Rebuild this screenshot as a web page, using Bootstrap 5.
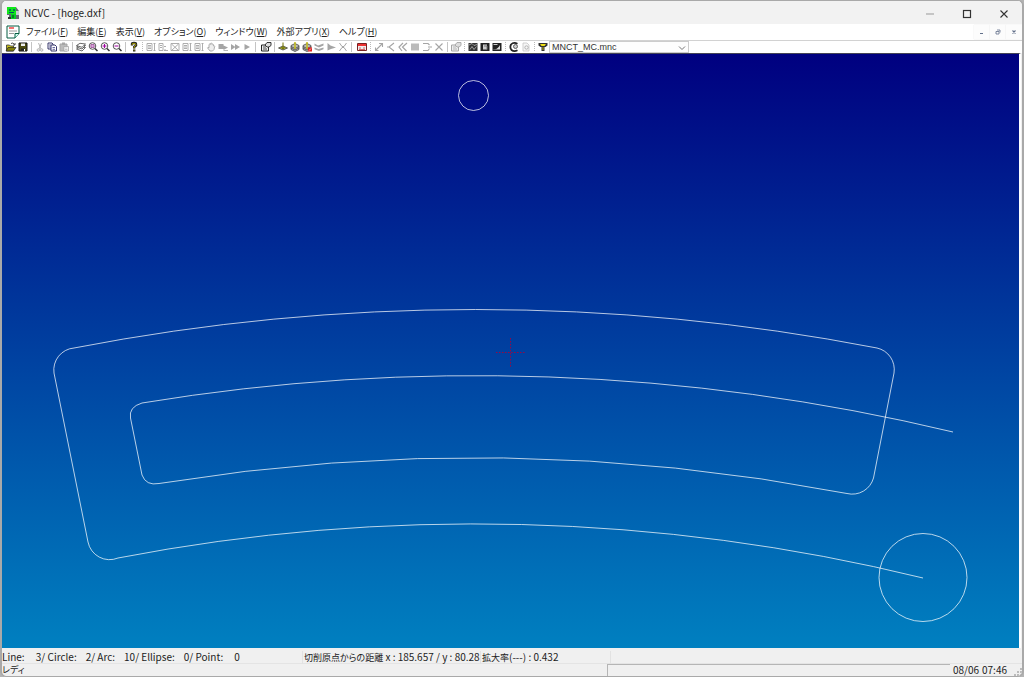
<!DOCTYPE html>
<html lang="ja">
<head>
<meta charset="utf-8">
<meta name="viewport" content="width=device-width, initial-scale=1">
<title>NCVC - [hoge.dxf]</title>
<link href="https://cdn.jsdelivr.net/npm/bootstrap@5.3.0/dist/css/bootstrap.min.css" rel="stylesheet">
<style>
body{background:#b4b4b4;font-family:"Noto Sans CJK JP",sans-serif;font-size:10px;line-height:12px;color:#222}
button{font:inherit;color:inherit;border:0;background:none;padding:0}
.app-window{background:#f0f0f0;border:1px solid #a9a9a9;border-left-width:2px;border-right-width:2px;border-radius:6px}
.title-bar{height:23px;background:#f2f2f2;padding-left:4px}
.title-bar h1{font-size:10px;line-height:12px}
.win-btn{width:37px;height:22px}
.menu-bar{height:17px;background:#fff;padding-left:4px;border-bottom:1px solid #d2d2d2}
.menu-list{gap:9px;padding-left:6px;font-size:9px;font-feature-settings:"palt"}
.menu-list button{white-space:nowrap;height:16px}
.mdi-btn{width:16px;height:14px;background:#fcfcfc;box-shadow:0 0 1px #ddd;color:#62708a}
.tool-bar{height:12px;background:#fff;padding-left:3px}
.tool-btn{width:12px;height:12px}
.tool-btn svg{width:12px;height:12px;display:block}
.tool-btn:disabled{color:#a5a5a5}
.sep,.grip{width:5px;height:10px;flex:none}
.sep::before,.grip::before{content:"";display:block;height:10px;width:1px;margin-left:2px;background:#c4c4c4}
.grip::before{background:repeating-linear-gradient(#bbb 0 1px,#fff 1px 2px)}
.sep.wide{width:7px}
.machine{width:140px;height:12px;font-size:9px;line-height:11px;font-family:"Liberation Sans",sans-serif;color:#333;border:0;box-shadow:inset 0 0 0 1px #ccc;background:#fdfdfd;border-radius:0;padding:1px 3px 0;appearance:none}
.machine-box svg{right:3px;top:4px;pointer-events:none}
.drawing{background:linear-gradient(#000080,#0080c0);min-height:0;margin-right:1px;border-right:2px solid #fff;border-top:1px solid #445}
.drawing svg{width:100%;height:100%;display:block}
.info-bar{height:16px;padding-top:3px;border-bottom:1px solid #e4e4e4}
.info-bar>div{white-space:pre;height:13px;border-right:1px solid #e2e2e2}
.geometry-info{width:301px}
.origin-info{width:178px;padding-left:1px}
.scale-info{width:130px;padding-left:1px}
.cjk{font-size:9px;font-feature-settings:"palt"}
.ready-bar{height:12px}
.progress-pane{width:343px;height:12px;border-left:1px solid #b5b5b5;border-top:1px solid #b5b5b5}
.clock{gap:3px;padding:0 7px 0 3px}
</style>
</head>
<body>
<svg width="0" height="0" class="position-absolute" aria-hidden="true">
<defs>
<symbol id="i-open" viewBox="0 0 12 12"><path d="M1.500 4h3l1 1h3v5h-7z" fill="#c8c020" stroke="#333" stroke-width=".8"/><path d="M3 6.500h8l-2.500 3.500H1z" fill="#82800a" stroke="#222" stroke-width=".7"/><path d="M6 2.500q2-1.500 3.500 1M10 2v2H8" fill="none" stroke="#222" stroke-width=".8"/></symbol>
<symbol id="i-save" viewBox="0 0 12 12"><path d="M2 2h8v8H2z" fill="#4b4b10" stroke="#111"/><path d="M4 2.500h4V5H4z" fill="#eee"/><path d="M4 7.500h4V10H4z" fill="#222"/><path d="M7 8h1v2H7z" fill="#fff"/></symbol>
<symbol id="i-cut" viewBox="0 0 12 12"><path d="M4.500 2l2.500 6M7.500 2L5 8" stroke="currentColor" fill="none" stroke-width=".8"/><circle cx="4.300" cy="9" r="1.200" fill="none" stroke="currentColor" stroke-width=".8"/><circle cx="7.700" cy="9" r="1.200" fill="none" stroke="currentColor" stroke-width=".8"/></symbol>
<symbol id="i-copy" viewBox="0 0 12 12"><g fill="#fff" stroke="#22225c" stroke-width=".9"><path d="M2 2h4l1 1v5H2z"/><path d="M5 4h4l1.500 1.500V10H5z"/></g><path d="M3 4h2M3 6h2M6.500 6.500h2.500M6.500 8.300h2.500" stroke="#448" stroke-width=".8"/></symbol>
<symbol id="i-paste" viewBox="0 0 12 12"><path d="M2 3h7v7H2z" fill="#bbb" stroke="currentColor"/><path d="M4 1.500h3V4H4z" fill="currentColor"/><path d="M6 5.500h4.500V10H6z" fill="#fff" stroke="currentColor" stroke-width=".8"/><path d="M7 7h2.500M7 8.500h2.500" stroke="currentColor" stroke-width=".6"/></symbol>
<symbol id="i-layers" viewBox="0 0 12 12"><g fill="#fff" stroke="#444" stroke-width=".8"><path d="M1.500 8L5 5.800l5.500.7L7 10z"/><path d="M1.500 6L5 3.800l5.500.7L7 8z"/><path d="M1.500 4.500L5 2.300l5.500.7L7 6.300z"/></g></symbol>
<symbol id="i-glass" viewBox="0 0 12 12"><circle cx="5.500" cy="5" r="3.300" fill="#fff" stroke="#444" stroke-width=".9"/><path d="M8 7.500l2.500 2.500" stroke="#333" stroke-width="1.500"/></symbol>
<symbol id="i-zoomall" viewBox="0 0 12 12"><use href="#i-glass"/><path d="M3.900 3.600h3.200v2.800H3.900z" fill="#e0b0e0" stroke="#904090" stroke-width=".8"/></symbol>
<symbol id="i-zoomin" viewBox="0 0 12 12"><use href="#i-glass"/><path d="M3.500 5h4M5.500 3v4" stroke="#a000a0" stroke-width="1.100"/></symbol>
<symbol id="i-zoomout" viewBox="0 0 12 12"><use href="#i-glass"/><path d="M3.500 5h4" stroke="#a000a0" stroke-width="1.100"/></symbol>
<symbol id="i-help" viewBox="0 0 12 12"><path d="M4 4.500V3q0-1 2-1t2 1v1.500L6.200 6v1.500M6.200 8.500v2" fill="none" stroke="#222" stroke-width="2.400"/><path d="M4.200 4V3q0-.7 1.800-.7t1.800.9v1L6.100 6v1.300M6.100 8.700v1" fill="none" stroke="#aaa000" stroke-width="1"/></symbol>
<symbol id="i-page" viewBox="0 0 12 12"><path d="M2 2.500h5v7H2zM3 4.500h3M3 6h3M3 7.500h3M8.500 2.500h2M9.500 2.500v7M8.500 9.500h2" fill="none" stroke="currentColor" stroke-width=".9"/></symbol>
<symbol id="i-page2" viewBox="0 0 12 12"><path d="M2 2.500h4v7H2zM3 4.500h2M3 6.500h2M7 5.500h2M7 9.500h4M8 8v2" fill="none" stroke="currentColor" stroke-width=".9"/></symbol>
<symbol id="i-pagex" viewBox="0 0 12 12"><path d="M2 2.500h8v7H2zM2.500 3l7 6.500M9.500 3l-7 6.500" fill="none" stroke="currentColor" stroke-width=".9"/></symbol>
<symbol id="i-hand" viewBox="0 0 12 12"><path d="M4 6V3.500q.7-1 1.400 0V2.500q.8-1 1.500 0v1q.8-1 1.500 0V5q1-.7 1.300.3L9 8.500 7.500 10H5L2.500 6.800q.3-1 1.500 0z" fill="#eee" stroke="currentColor" stroke-width=".9"/></symbol>
<symbol id="i-run" viewBox="0 0 12 12"><path d="M1.500 3h5v1.500L11 6.500 6.500 9V8h-5z" fill="currentColor"/><path d="M6.500 9.500h4.500" stroke="currentColor" stroke-width=".8"/></symbol>
<symbol id="i-fast" viewBox="0 0 12 12"><path d="M2 3l4.500 3L2 9zM6 3l5 3-5 3z" fill="currentColor"/></symbol>
<symbol id="i-play" viewBox="0 0 12 12"><path d="M3.500 3L9 6 3.500 9z" fill="currentColor"/></symbol>
<symbol id="i-prop" viewBox="0 0 12 12"><path d="M1.500 4h7v6h-7z" fill="#eee" stroke="currentColor"/><path d="M3 6h3M3 8h4" stroke="currentColor" stroke-width=".8"/><path d="M5 4l2-2.500h4v3L9 6H7z" fill="#ddd" stroke="currentColor" stroke-width=".9"/></symbol>
<symbol id="i-origin" viewBox="0 0 12 12"><path d="M1.500 7L6 5l4.500 2L6 9z" fill="#aab03a" stroke="#444" stroke-width=".8"/><path d="M6 1.500v6M4.500 6L6 8l1.500-2" fill="none" stroke="#737300"/></symbol>
<symbol id="i-shape" viewBox="0 0 12 12"><path d="M2 4.500L6 2.500l4 2v4l-4 2-4-2z" fill="#bbb" stroke="#444" stroke-width=".8"/><path d="M2 5.500l4 2 4-2M2 7l4 2 4-2" fill="none" stroke="#444" stroke-width=".8"/><path d="M6 1v7" stroke="#c4be1a" stroke-width="1.500"/></symbol>
<symbol id="i-shapered" viewBox="0 0 12 12"><use href="#i-shape"/><path d="M7 6.500h4v4H7z" fill="#d22"/><path d="M8 9.500l2-2" stroke="#fff" stroke-width=".7"/></symbol>
<symbol id="i-fold" viewBox="0 0 12 12"><path d="M1.500 2.500L5 4.500l5.500-2v2L6 6.500l-4.500-2zM1.500 6.500l4 1.500 5-1.500v1.700L6 10 1.500 8.300z" fill="currentColor"/></symbol>
<symbol id="i-cone" viewBox="0 0 12 12"><path d="M2.500 2l3 2.500L11 6.500 6 8l-3.500 1.500z" fill="currentColor"/></symbol>
<symbol id="i-cross" viewBox="0 0 12 12"><path d="M2.500 2L5 5.500h2L9.500 2M2.500 10L5 6.500h2L9.500 10" fill="none" stroke="currentColor"/></symbol>
<symbol id="i-nc" viewBox="0 0 12 12"><path d="M1.500 2.500h9v7h-9z" fill="#eee" stroke="#722"/><path d="M2 4h8" stroke="#e33" stroke-width="2"/><path d="M3 7h2M7 7h2M3 8.500h6" stroke="#c44" stroke-width=".8"/></symbol>
<symbol id="i-resize" viewBox="0 0 12 12"><path d="M2.500 9.500l7-7M6 2.500h3.500V6M2.500 6.500v3h3" fill="none" stroke="currentColor" stroke-width="1.100"/></symbol>
<symbol id="i-lt" viewBox="0 0 12 12"><path d="M9 2L4 6l5 4M2 6h3" fill="none" stroke="currentColor" stroke-width="1.100"/></symbol>
<symbol id="i-lt2" viewBox="0 0 12 12"><path d="M6 2L2 6l3 4M10 2L5.500 6l4 4" fill="none" stroke="currentColor" stroke-width="1.200"/></symbol>
<symbol id="i-block" viewBox="0 0 12 12"><path d="M2 2.500h8v7H2z" fill="#bbb"/></symbol>
<symbol id="i-trim" viewBox="0 0 12 12"><path d="M2 2.500h5l1.500 1.500M8.500 7.500L7 9.500H2M7 6h4" fill="none" stroke="currentColor" stroke-width="1.100"/></symbol>
<symbol id="i-x" viewBox="0 0 12 12"><path d="M2.500 2.500l7 7M9.500 2.500l-7 7" stroke="currentColor" stroke-width="1.100"/></symbol>
<symbol id="i-view1" viewBox="0 0 12 12"><path d="M1.500 2h9v8h-9z" fill="#333"/><path d="M2 4l3-1.500 2 2 3-1M3 8.500l2-3 2 3 2.500-3" fill="none" stroke="#bbb" stroke-width=".8"/></symbol>
<symbol id="i-view2" viewBox="0 0 12 12"><path d="M1.500 2h9v8h-9z" fill="#222"/><path d="M4 3.500h4v5H4z" fill="#ccc"/><path d="M5 5h3v3.500" fill="none" stroke="#777"/></symbol>
<symbol id="i-view3" viewBox="0 0 12 12"><path d="M1.500 2h9v8h-9z" fill="#222"/><path d="M2.500 8q4 1 6.500-4V8.500H2.500z" fill="#ddd"/><path d="M2.500 3.500h4" stroke="#ccc"/></symbol>
<symbol id="i-tool" viewBox="0 0 12 12"><path d="M9.500 2.700Q5.500.8 3 3.500 1.500 6.500 3.500 9 6 11 9.500 9.300" fill="none" stroke="#222" stroke-width="1.800"/><circle cx="7.500" cy="5.500" r="2" fill="#ccc" stroke="#444" stroke-width=".8"/></symbol>
<symbol id="i-doc" viewBox="0 0 12 12"><path d="M3 2h4l2 2v6H3z" fill="#f6f6f6" stroke="#c5c5c5" stroke-width=".8"/><circle cx="6.500" cy="6.500" r="1.700" fill="none" stroke="currentColor" stroke-width=".8"/></symbol>
<symbol id="i-mill" viewBox="0 0 12 12"><path d="M1.500 2h9v2.500L8.500 6H7.500v4h-3V6h-1l-2-1.500z" fill="#333"/><path d="M3 3h6L7.500 5h-3z" fill="#efdf16"/><path d="M5.500 6h1v3h-1z" fill="#bdb010"/></symbol>
</defs></svg>

<div class="app-window vh-100 d-flex flex-column overflow-hidden">
<header class="title-bar d-flex align-items-center flex-shrink-0">
<svg width="14" height="14" viewBox="0 0 14 14" aria-hidden="true"><path d="M1 1h9l3 4v8H3V9H1z" fill="#667"/><path d="M1 1h9v7H1z" fill="#10e818"/><path d="M3 3h2v2H3zM7 3h2v2H7z" fill="#075"/><path d="M3 6.500h5" stroke="#056"/><path d="M5 8h5v5H5z" fill="#08cc28"/><path d="M7 9v3" stroke="#032"/><path d="M10 5h3v4h-3z" fill="#c4cbd4"/><path d="M2 11h3v2H2z" fill="#333"/></svg>
<h1 class="mb-0 ms-1 fw-normal flex-grow-1">NCVC - [hoge.dxf]</h1>
<button class="win-btn" aria-label="最小化"><svg width="10" height="10"><path d="M1 5h8" stroke="#999"/></svg></button>
<button class="win-btn" aria-label="最大化"><svg width="10" height="10"><rect x="1.500" y="1.500" width="7" height="7" fill="none" stroke="#333" stroke-width="1.200"/></svg></button>
<button class="win-btn" aria-label="閉じる"><svg width="10" height="10"><path d="M1.500 1.500l7 7M8.500 1.500l-7 7" stroke="#333" stroke-width="1.100"/></svg></button>
</header>

<nav class="menu-bar d-flex align-items-center flex-shrink-0">
<svg width="14" height="14" viewBox="0 0 14 14" aria-hidden="true"><path d="M1 1h12v7.500L9 13H1z" fill="#fff" stroke="#075c43"/><path d="M13 8.500H9V13" fill="#cfe" stroke="#075c43"/><path d="M3 3h5" stroke="#e44" stroke-width="1.500"/><path d="M3 6h8M3 8.500h5" stroke="#999"/></svg>
<div class="menu-list d-flex flex-grow-1">
<button>ファイル(<u>F</u>)</button><button>編集(<u>E</u>)</button><button>表示(<u>V</u>)</button><button>オプション(<u>O</u>)</button><button>ウィンドウ(<u>W</u>)</button><button>外部アプリ(<u>X</u>)</button><button>ヘルプ(<u>H</u>)</button>
</div>
<button class="mdi-btn d-flex align-items-center justify-content-center" aria-label="子を最小化"><svg width="6" height="6"><path d="M1 4.500h3" stroke="currentColor"/></svg></button>
<button class="mdi-btn d-flex align-items-center justify-content-center" aria-label="元に戻す"><svg width="6" height="6"><path d="M2 1h3v2.500M1 2.500h3V5H1z" fill="none" stroke="currentColor" stroke-width=".8"/></svg></button>
<button class="mdi-btn d-flex align-items-center justify-content-center" aria-label="子を閉じる"><svg width="6" height="6"><path d="M1.500 1.500l3 3M4.500 1.500l-3 3" stroke="currentColor" stroke-width="1.100"/></svg></button>
</nav>

<div class="tool-bar d-flex align-items-center flex-shrink-0" role="toolbar" aria-label="ツールバー">
<button class="tool-btn" aria-label="開く"><svg><use href="#i-open"/></svg></button>
<button class="tool-btn" aria-label="保存"><svg><use href="#i-save"/></svg></button>
<span class="sep"></span>
<button class="tool-btn" disabled aria-label="切り取り"><svg><use href="#i-cut"/></svg></button>
<button class="tool-btn" aria-label="コピー"><svg><use href="#i-copy"/></svg></button>
<button class="tool-btn" disabled aria-label="貼り付け"><svg><use href="#i-paste"/></svg></button>
<span class="sep"></span>
<button class="tool-btn" aria-label="レイヤ"><svg><use href="#i-layers"/></svg></button>
<button class="tool-btn" aria-label="全体表示"><svg><use href="#i-zoomall"/></svg></button>
<button class="tool-btn" aria-label="拡大"><svg><use href="#i-zoomin"/></svg></button>
<button class="tool-btn" aria-label="縮小"><svg><use href="#i-zoomout"/></svg></button>
<span class="sep"></span>
<button class="tool-btn" aria-label="ヘルプ"><svg><use href="#i-help"/></svg></button>
<span class="grip"></span>
<button class="tool-btn" disabled aria-label="トレース"><svg><use href="#i-page"/></svg></button>
<button class="tool-btn" disabled aria-label="行挿入"><svg><use href="#i-page2"/></svg></button>
<button class="tool-btn" disabled aria-label="ブレーク解除"><svg><use href="#i-pagex"/></svg></button>
<button class="tool-btn" disabled aria-label="ステップ"><svg><use href="#i-page"/></svg></button>
<button class="tool-btn" disabled aria-label="カーソルまで"><svg><use href="#i-page"/></svg></button>
<button class="tool-btn" disabled aria-label="停止"><svg><use href="#i-hand"/></svg></button>
<button class="tool-btn" disabled aria-label="実行"><svg><use href="#i-run"/></svg></button>
<button class="tool-btn" disabled aria-label="高速"><svg><use href="#i-fast"/></svg></button>
<button class="tool-btn" disabled aria-label="再生"><svg><use href="#i-play"/></svg></button>
<span class="sep wide"></span>
<button class="tool-btn" aria-label="プロパティ"><svg><use href="#i-prop"/></svg></button>
<span class="sep"></span>
<button class="tool-btn" aria-label="原点"><svg><use href="#i-origin"/></svg></button>
<button class="tool-btn" aria-label="形状加工"><svg><use href="#i-shape"/></svg></button>
<button class="tool-btn" aria-label="形状編集"><svg><use href="#i-shapered"/></svg></button>
<button class="tool-btn" disabled aria-label="面加工"><svg><use href="#i-fold"/></svg></button>
<button class="tool-btn" disabled aria-label="方向"><svg><use href="#i-cone"/></svg></button>
<button class="tool-btn" disabled aria-label="交点"><svg><use href="#i-cross"/></svg></button>
<span class="sep wide"></span>
<button class="tool-btn" aria-label="NC生成"><svg><use href="#i-nc"/></svg></button>
<span class="grip"></span>
<button class="tool-btn" disabled aria-label="伸縮"><svg><use href="#i-resize"/></svg></button>
<button class="tool-btn" disabled aria-label="分岐"><svg><use href="#i-lt"/></svg></button>
<button class="tool-btn" disabled aria-label="輪郭"><svg><use href="#i-lt2"/></svg></button>
<button class="tool-btn" disabled aria-label="領域"><svg><use href="#i-block"/></svg></button>
<button class="tool-btn" disabled aria-label="切断"><svg><use href="#i-trim"/></svg></button>
<button class="tool-btn" disabled aria-label="削除"><svg><use href="#i-x"/></svg></button>
<span class="sep"></span>
<button class="tool-btn" disabled aria-label="設定"><svg><use href="#i-prop"/></svg></button>
<span class="grip"></span>
<button class="tool-btn" aria-label="表示1"><svg><use href="#i-view1"/></svg></button>
<button class="tool-btn" aria-label="表示2"><svg><use href="#i-view2"/></svg></button>
<button class="tool-btn" aria-label="表示3"><svg><use href="#i-view3"/></svg></button>
<span class="grip"></span>
<button class="tool-btn" aria-label="外部ツール"><svg><use href="#i-tool"/></svg></button>
<button class="tool-btn" disabled aria-label="文書"><svg><use href="#i-doc"/></svg></button>
<span class="grip"></span>
<button class="tool-btn" aria-label="機械情報"><svg><use href="#i-mill"/></svg></button>
<div class="machine-box position-relative d-flex">
<label class="visually-hidden" for="machine">機械情報ファイル</label>
<select id="machine" class="machine"><option>MNCT_MC.mnc</option></select>
<svg class="position-absolute" width="8" height="6" aria-hidden="true"><path d="M1 1.500l3 3 3-3" fill="none" stroke="#777"/></svg>
</div>
</div>

<main class="drawing flex-grow-1">
<svg viewBox="2 54 1017 594" role="img" aria-label="hoge.dxf">
<g fill="none" stroke="#fff" stroke-opacity=".72" stroke-width="1">
<circle cx="473.500" cy="95.500" r="15"/>
<circle cx="923" cy="577.500" r="44"/>
<path d="M923 578A1885 1885 0 0 0 118 558A22 22 0 0 1 88 542L54 373A22 22 0 0 1 74 348A2113 2113 0 0 1 877 348A22 22 0 0 1 894 373L873.500 478A22 22 0 0 1 847 493.500"/>
<path d="M847 493.500A1967 1967 0 0 0 159 483.500Q146 486 142 475L130.500 418Q128.500 407 142 403A2050 2050 0 0 1 953 432"/>
</g>
<path d="M496 352.500h30M510.500 338v30" fill="none" stroke="#b00032" stroke-opacity=".85" stroke-dasharray="1.500 1.500"/>
</svg>
</main>

<footer class="flex-shrink-0">
<div class="info-bar d-flex">
<div class="geometry-info">Line:     3/ Circle:    2/ Arc:    10/ Ellipse:    0/ Point:     0</div>
<div class="origin-info"><span class="cjk">切削原点からの距離</span> x : 185.657 / y : 80.28</div>
<div class="scale-info"><span class="cjk">拡大率</span>(---) : 0.432</div>
</div>
<div class="ready-bar d-flex">
<span class="cjk flex-grow-1">レディ</span>
<div class="progress-pane"></div>
<div class="clock d-flex"><span>08/06</span><span>07:46</span></div>
<svg width="8" height="12" aria-hidden="true"><path d="M6 4h2v2H6zM3 7h2v2H3zM6 7h2v2H6zM0 10h2v2H0zM3 10h2v2H3zM6 10h2v2H6z" fill="#bbb"/></svg>
</div>
</footer>
</div>
<script src="https://cdn.jsdelivr.net/npm/bootstrap@5.3.0/dist/js/bootstrap.bundle.min.js"></script>
</body>
</html>
